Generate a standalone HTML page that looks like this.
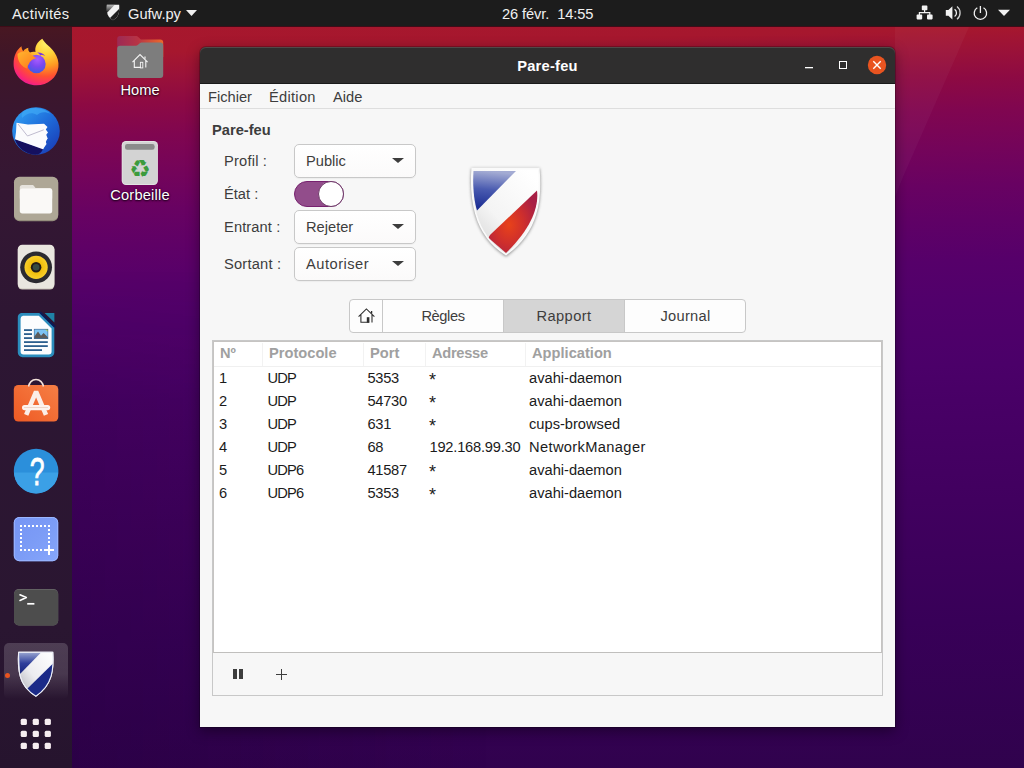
<!DOCTYPE html>
<html lang="fr">
<head>
<meta charset="utf-8">
<title>Pare-feu</title>
<style>
*{box-sizing:border-box;margin:0;padding:0}
html,body{width:1024px;height:768px;overflow:hidden;background:#3a0350}
body{font-family:"Liberation Sans","DejaVu Sans",sans-serif;font-size:14.67px;color:#3d3d3d;position:relative}
.abs{position:absolute}
#wall{position:absolute;left:0;top:0;width:1024px;height:768px;
 background:
  linear-gradient(178.3deg,#a8182c 0px,#a6172e 57px,#9b1238 79px,#8d0a43 107px,#800650 139px,#74045a 177px,#680262 214px,#5f0166 249px,#56006a 289px,#51006b 329px,#4b0069 394px,#480066 429px,#41005f 529px,#380058 649px,#30024d 797px);}
#topbar{position:absolute;left:0;top:0;width:1024px;height:27px;background:#1c1c1c;color:#f0f0f0;border-bottom:1px solid #3f0c18}
#topbar span{position:absolute;top:1px;line-height:27px;white-space:nowrap}
#dock{position:absolute;left:0;top:27px;width:72px;height:741px;background:linear-gradient(180deg,#481722 0,#3f1628 30px,#391630 90px,#351733 150px,#2d1633 300px,#2a1631 600px,#26142e 741px)}
.dicon{position:absolute;left:0;width:72px}
.lbl{position:absolute;color:#fff;text-align:center;white-space:nowrap;text-shadow:0 1px 2px rgba(0,0,0,.8),0 0 2px rgba(0,0,0,.6)}
#win{position:absolute;left:200px;top:47px;width:695px;height:680px;background:linear-gradient(#2f2e2e 0,#2f2e2e 20px,#f7f7f7 20px);border-radius:6px 6px 0 0;
 box-shadow:0 0 0 1px rgba(0,0,0,.22),0 4px 14px 0 rgba(0,0,0,.42)}
#title{position:absolute;left:0;top:0;width:695px;height:37px;background:#2f2e2e;border-radius:6px 6px 0 0;border-bottom:1px solid #1a1a1a;box-shadow:inset 0 1px 0 rgba(255,220,220,.16)}
#title .t{position:absolute;left:0;width:695px;top:0;line-height:38px;text-align:center;color:#fff;font-weight:bold}
#menubar{position:absolute;left:0;top:37px;width:695px;height:25px;border-bottom:1px solid #dedede;background:#f7f7f7}
#menubar span{position:absolute;top:0;line-height:26px}
.lab{position:absolute;white-space:nowrap;line-height:20px}
.combo{position:absolute;left:94px;width:122px;height:34px;border:1px solid #c8c8c8;border-radius:5px;background:linear-gradient(#ffffff,#fbfafa);box-shadow:0 1px 1px rgba(0,0,0,.04)}
.combo span{position:absolute;left:11px;top:0;line-height:32px}
.combo i{position:absolute;left:97px;top:13px;width:0;height:0;border-left:6px solid transparent;border-right:6px solid transparent;border-top:5.500px solid #3d3d3d}
#tabs{position:absolute;left:149px;top:252px;width:397px;height:34px;border:1px solid #c8c8c8;border-radius:4px;background:#fdfdfd;overflow:hidden}
#tabs div{position:absolute;top:0;height:32px;line-height:32px;text-align:center;border-left:1px solid #c8c8c8}
#frame{position:absolute;left:12px;top:293px;width:671px;height:356px;border:1px solid #c8c8c8;background:#f7f7f7}
#tree{position:absolute;left:0;top:0;width:669px;height:312px;background:#fff;border:1px solid #c6c4c2;border-bottom:1px solid #c0bfbd}
.hd{position:absolute;top:1px;height:23px;line-height:20px;font-weight:bold;color:#a0a0a0;border-right:1px solid #f2f2f2;padding-left:6px}
.row{position:absolute;left:0;width:667px;height:23px;line-height:23px;color:#1b1b1b}
.row span{position:absolute;top:0;white-space:nowrap}
</style>
</head>
<body>
<div id="wall"></div>
<div class="abs" style="left:895px;top:27px;width:80px;height:170px;background:rgba(255,255,255,.035);clip-path:polygon(0 0,74px 0,8px 150px,0 170px)"></div>
<div class="abs" style="left:72px;top:270px;width:420px;height:498px;background:linear-gradient(90deg,rgba(8,0,20,.14),rgba(8,0,20,.1) 130px,rgba(8,0,20,0));-webkit-mask-image:linear-gradient(180deg,transparent,#000 130px);mask-image:linear-gradient(180deg,transparent,#000 130px)"></div>

<!-- desktop icons -->
<div id="desk">
<svg class="abs" style="left:100px;top:27px" width="80" height="60" viewBox="0 0 80 60">
 <defs><linearGradient id="hfb" x1="0" y1="0" x2="1" y2="0"><stop offset="0" stop-color="#9c2a55"/><stop offset=".45" stop-color="#b83445"/><stop offset="1" stop-color="#ec6a2c"/></linearGradient></defs>
 <path d="M17.200 12a3 3 0 0 1 3-3h15.500c1.200 0 2 .4 2.800 1.200l2.300 2.200h19.400a3 3 0 0 1 3 3V30H17.200Z" fill="url(#hfb)"/>
 <path d="M17.200 21.800a3 3 0 0 1 3-3h15c1.200 0 2-.3 2.800-1l1.500-1.300c.8-.7 1.600-1 2.800-1h17.900a3 3 0 0 1 3 3V48a3 3 0 0 1-3 3H20.200a3 3 0 0 1-3-3Z" fill="#7d7d7d"/>
 <path d="M32.500 35.200L40 27.600L47.600 35.200M34.300 33.800V40.400H41M45.800 33.800V40.400" fill="none" stroke="#f4f4f4" stroke-width="1.100"/>
 <rect x="40.400" y="35.300" width="2.400" height="5.600" fill="none" stroke="#f4f4f4" stroke-width=".9"/>
 <path d="M45 29.500v2.200" stroke="#f4f4f4" stroke-width="1.200"/>
</svg>
<div class="lbl" style="left:100px;top:80px;width:80px;line-height:20px">Home</div>
<svg class="abs" style="left:100px;top:130px" width="80" height="60" viewBox="0 0 80 60">
 <rect x="21.700" y="11" width="36.200" height="44" rx="4.200" fill="#e3e3e3"/>
 <rect x="22.600" y="11.900" width="34.400" height="42.200" rx="3.500" fill="#d3d3d3"/>
 <rect x="25" y="14" width="29.600" height="5.700" rx="2.200" fill="#8b8b8b"/>
 <text x="40" y="47.200" font-family="DejaVu Sans, sans-serif" font-weight="bold" font-size="24" text-anchor="middle" fill="#3b9b3c">♻</text>
</svg>
<div class="lbl" style="left:100px;top:185px;width:80px;line-height:20px;letter-spacing:.18px">Corbeille</div>
</div>

<div id="topbar">
<span style="left:12px;letter-spacing:.32px">Activités</span>
<svg class="abs" style="left:106px;top:4px" width="14" height="17" viewBox="0 0 14 17">
 <defs><linearGradient id="tsg" x1="0" y1="0" x2="0" y2="1"><stop offset="0" stop-color="#b8b8b8"/><stop offset="1" stop-color="#1a1a1a"/></linearGradient>
 <clipPath id="tsc"><path d="M.8 .8h12.400c.2 4 0 7-.8 9.500C11.400 13 9.500 15 7 16.200C4.500 15 2.600 13 1.600 10.300C.8 7.800 .6 4.800 .8 .8Z"/></clipPath></defs>
 <path d="M.8 .8h12.400c.2 4 0 7-.8 9.500C11.400 13 9.500 15 7 16.200C4.500 15 2.600 13 1.600 10.300C.8 7.800 .6 4.800 .8 .8Z" fill="#f2f2f2"/>
 <g clip-path="url(#tsc)"><path d="M.8 .8h8L.8 9Z" fill="url(#tsg)"/><path d="M13.500 4.500L4 14l3 3 7-6Z" fill="#1e1e1e"/></g>
</svg>
<span style="left:128px">Gufw.py</span>
<svg class="abs" style="left:186px;top:10px" width="11" height="6" viewBox="0 0 11 6"><path d="M0 0h11L5.500 6z" fill="#f0f0f0"/></svg>
<span style="left:502px;letter-spacing:-.1px">26 févr.&nbsp; 14:55</span>
<svg class="abs" style="left:912px;top:0" width="104" height="27" viewBox="0 0 104 27">
 <g fill="#f2f2f2">
  <rect x="9.800" y="5.600" width="5.600" height="4.600" rx=".8"/><rect x="4.600" y="14.600" width="5.600" height="4.800" rx=".8"/><rect x="15" y="14.600" width="5.600" height="4.800" rx=".8"/>
  <path d="M12 10h1.200v2H18.400v3H17.200v-1.800H8v1.800H6.800v-3H12Z"/>
  <path d="M33.800 10h2.600l4-3.800v13.400l-4-3.800h-2.600Z"/>
 </g>
 <path d="M42.600 9.200a4.600 4.600 0 0 1 0 7.400" fill="none" stroke="#f2f2f2" stroke-width="1.300"/>
 <path d="M45 6.600a8 8 0 0 1 0 12.600" fill="none" stroke="#f2f2f2" stroke-width="1.300" opacity=".85"/>
 <path d="M65.300 7.800a6.200 6.200 0 1 0 6.200 0" fill="none" stroke="#f2f2f2" stroke-width="1.300"/>
 <path d="M68.400 6v7" stroke="#f2f2f2" stroke-width="1.300"/>
 <path d="M86 9.800h12l-6 6.200Z" fill="#f2f2f2"/>
</svg>
</div>

<div id="dock">
<!--DOCKSTART-->
<!-- active highlight -->
<div class="abs" style="left:4px;top:616px;width:64px;height:56px;border-radius:5px;background:linear-gradient(180deg,rgba(255,255,255,.17) 0,rgba(255,255,255,.15) 55%,rgba(255,255,255,0) 100%)"></div>
<div class="abs" style="left:4.500px;top:645.500px;width:5.500px;height:5.500px;border-radius:3px;background:#e95420"></div>

<!-- firefox : viewBox maps to screen x 4..68, y 31..95 -->
<svg class="abs" style="left:4px;top:4px" width="64" height="64" viewBox="0 0 64 64">
 <defs>
  <radialGradient id="ffg" cx=".72" cy=".1" r=".98"><stop offset="0" stop-color="#fff36a"/><stop offset=".25" stop-color="#ffd238"/><stop offset=".5" stop-color="#ff9a22"/><stop offset=".72" stop-color="#ff5230"/><stop offset=".9" stop-color="#fc2a6c"/><stop offset="1" stop-color="#e81a9a"/></radialGradient>
  <radialGradient id="ffp" cx=".55" cy=".25" r=".8"><stop offset="0" stop-color="#a85cff"/><stop offset=".5" stop-color="#7a48f0"/><stop offset="1" stop-color="#3a5fe0"/></radialGradient>
  <linearGradient id="ffh" x1="0" y1="0" x2="1" y2="1"><stop offset="0" stop-color="#ffb52e"/><stop offset=".6" stop-color="#ff8f22"/><stop offset="1" stop-color="#ff6a28"/></linearGradient>
 </defs>
 <path d="M38.300 7.800C41 13 47 16 50.500 21.500C53.500 26 55 31 54.400 36C53.200 46.500 44 54.300 32.500 54.300C19.500 54.300 9.600 44.500 9.600 33C9.600 25 12.500 19 17.500 15.300C17.500 17.500 18.200 19 19.300 20.200C20.500 18.300 22.300 17.200 24.300 16.800C24 19 24.500 20.500 26 21.500C28 20.500 30 20.500 31.500 21C30.500 16 33 11 38.300 7.800Z" fill="url(#ffg)"/>
 <circle cx="32.500" cy="33" r="9.200" fill="url(#ffp)"/>
 <path d="M13.500 23C17 20 23 20 27 23.500L32.400 27.300C28.500 28 26 30 24.600 33.500C23.500 35 23 36 23 37.500C18 36 13.500 31 13.500 23Z" fill="url(#ffh)"/>
 <path d="M33 21.500C36.500 21 39.500 22.500 41 25C39 23.800 37.500 24 36.300 24.500C35.500 23 34.500 22 33 21.500Z" fill="#7a3ae0"/>
</svg>

<!-- thunderbird : screen 4..68, 99..163 -->
<svg class="abs" style="left:4px;top:72px" width="64" height="64" viewBox="0 0 64 64">
 <defs>
  <linearGradient id="tbg" x1=".15" y1=".1" x2=".9" y2=".9"><stop offset="0" stop-color="#2f9bf0"/><stop offset=".45" stop-color="#1f6fdc"/><stop offset="1" stop-color="#1a3fb8"/></linearGradient>
 </defs>
 <circle cx="32" cy="32" r="23.800" fill="url(#tbg)"/>
 <path d="M11 41C14 49 21 54.500 30 55.600C34 55.800 37 55 39 50L11 40Z" fill="#15105f"/>
 <path d="M20 12C28 7 40 8 47 15C41 12 36 13 33 16C28 13 23 14 18 19C17 16 18 14 20 12Z" fill="#3fa8f5" opacity=".7"/>
 <path d="M12.500 23.800L24 25.500L40 24.800L41.500 32L43 40L39 50.200L11 40.200L12 33Z" fill="#fbfbfd"/>
 <path d="M14 25L23.500 37L40.500 30.500" fill="none" stroke="#b9b4c9" stroke-width=".9"/>
 <path d="M40 24.800L43.500 28L41.800 30.500L44 33.500L42 36L43.800 39.500L41.500 42L42.500 45L39 50.200Z" fill="#fbfbfd"/>
</svg>

<!-- files : screen 4..68, 167..231 -->
<svg class="abs" style="left:4px;top:140px" width="64" height="64" viewBox="0 0 64 64">
 <rect x="10" y="10.400" width="44.200" height="43.800" rx="5.500" fill="#958e7d"/>
 <rect x="10" y="9.800" width="44.200" height="43.200" rx="5.500" fill="#aea796"/>
 <path d="M15.800 20.500a2.500 2.500 0 0 1 2.500-2.500h9.700c1 0 1.500.3 2 1l1.500 2h14.200a2.500 2.500 0 0 1 2.500 2.500v8H15.800Z" fill="#e6e3dd"/>
 <rect x="15.800" y="21.600" width="32.400" height="24.800" rx="2.600" fill="#faf9f7"/>
 <path d="M15.800 22.500h14l2-1.600h14" fill="none"/>
</svg>

<!-- rhythmbox : screen 4..68, 235..299 -->
<svg class="abs" style="left:4px;top:208px" width="64" height="64" viewBox="0 0 64 64">
 <defs><radialGradient id="rbg" cx=".5" cy=".5" r=".5"><stop offset="0" stop-color="#e0a800"/><stop offset=".55" stop-color="#f2c010"/><stop offset="1" stop-color="#f8cf2a"/></radialGradient></defs>
 <rect x="13.800" y="10.600" width="36.600" height="44" rx="4.500" fill="#c9c4b8"/>
 <rect x="13.800" y="9.800" width="36.600" height="43.800" rx="4.500" fill="#e9e6df"/>
 <circle cx="32.100" cy="32.300" r="15.900" fill="#2b2a30"/>
 <circle cx="32.100" cy="32.300" r="11.600" fill="url(#rbg)"/>
 <circle cx="32.100" cy="32.300" r="5.300" fill="#231c18"/>
 <circle cx="32.100" cy="32.300" r="3.300" fill="#364b42"/>
</svg>

<!-- writer : screen 4..68, 303..367 -->
<svg class="abs" style="left:4px;top:276px" width="64" height="64" viewBox="0 0 64 64">
 <path d="M17 10h19l14.300 14v25.500a4.700 4.700 0 0 1-4.700 4.700H18.500a4.700 4.700 0 0 1-4.700-4.700V14.700A4.700 4.700 0 0 1 17 10Z" fill="#2b8dbd"/>
 <path d="M19 12.800h15.800L47.600 25.500v23a3 3 0 0 1-3 3H19.600a3 3 0 0 1-3-3V15.800a3 3 0 0 1 2.400-3Z" fill="#fcfdfe"/>
 <path d="M36 9.200L51 24" stroke="#0c1a55" stroke-width="2.200"/>
 <path d="M40.600 10h9.800v9.400Z" fill="#1f82a6"/>
 <g fill="#2c5f8e"><rect x="20" y="26.200" width="8" height="1.800"/><rect x="20" y="30.200" width="8" height="1.800"/><rect x="20" y="34.200" width="8" height="1.800"/><rect x="20" y="38.200" width="23.800" height="1.800"/><rect x="20" y="42.200" width="23.800" height="1.800"/><rect x="20" y="46.200" width="18" height="1.800"/></g>
 <rect x="30.200" y="26.200" width="13.700" height="9.500" fill="#7cc3f4"/>
 <path d="M41 26.200h2.900v2.600Z" fill="#c8dc40"/>
 <path d="M30.200 35.700v-2l3.800-5.300 3 4.300 2.600-2.800 4.300 4.300v1.500Z" fill="#5b5b5b"/>
 <rect x="30.200" y="26.200" width="13.700" height="9.500" fill="none" stroke="#2c5f8e" stroke-width=".6"/>
</svg>

<!-- software : screen 4..68, 371..435 -->
<svg class="abs" style="left:4px;top:344px" width="64" height="64" viewBox="0 0 64 64">
 <defs><linearGradient id="swg" x1="0" y1="1" x2="1" y2="0"><stop offset="0" stop-color="#ee5a24"/><stop offset="1" stop-color="#f67f45"/></linearGradient></defs>
 <path d="M24.800 16.500v-.8a7.200 7.200 0 0 1 14.400 0v.8" fill="none" stroke="#f4e2da" stroke-width="1.600"/>
 <rect x="9.800" y="14" width="44.500" height="36.600" rx="4.500" fill="url(#swg)"/>
 <path d="M24.800 15.500v-1.500M39.200 15.500v-1.500" stroke="#f4e2da" stroke-width="1.600"/>
 <path d="M22.200 43.800L32.100 20.600L42 43.800" fill="none" stroke="#fbeee8" stroke-width="4.600" stroke-linejoin="miter" stroke-miterlimit="2"/>
 <rect x="18" y="34" width="28.200" height="5.200" rx="2.600" fill="#fdf3ee"/>
 <rect x="20" y="36.100" width="24" height=".7" fill="#e9c9bb"/>
</svg>

<!-- help : screen 4..68, 439..503 -->
<svg class="abs" style="left:4px;top:412px" width="64" height="64" viewBox="0 0 64 64">
 <defs><clipPath id="hpc"><circle cx="32.100" cy="32.100" r="22.300"/></clipPath></defs>
 <circle cx="32.100" cy="32.100" r="22.300" fill="#2b8fdb"/>
 <rect x="0" y="33.500" width="64" height="32" fill="#3ba0e6" clip-path="url(#hpc)"/>
 <text transform="translate(33.200 45.900) scale(.76 1.1)" font-family="Liberation Sans, sans-serif" font-size="35" text-anchor="middle" fill="#fff" stroke="#fff" stroke-width=".7">?</text>
</svg>

<!-- screenshot : screen 4..68, 507..571 -->
<svg class="abs" style="left:4px;top:480px" width="64" height="64" viewBox="0 0 64 64">
 <defs><linearGradient id="scg" x1="0" y1="0" x2="1" y2="1"><stop offset="0" stop-color="#7695f5"/><stop offset=".5" stop-color="#7c9cf6"/><stop offset="1" stop-color="#86a6fb"/></linearGradient></defs>
 <rect x="9.800" y="10" width="44.400" height="44.200" rx="5.500" fill="url(#scg)"/>
 <rect x="10.300" y="10.500" width="43.400" height="43.200" rx="5" fill="none" stroke="#9bb6ff" stroke-width="1"/>
 <path d="M16 19h30M16 43h26" stroke="#fff" stroke-width="2" stroke-dasharray="2 2"/>
 <path d="M17 22v20M45 22v18" stroke="#fff" stroke-width="2" stroke-dasharray="2 2"/>
 <path d="M45 38v10M40 43h10" stroke="#fff" stroke-width="2"/>
</svg>

<!-- terminal : screen 4..68, 575..639 -->
<svg class="abs" style="left:4px;top:548px" width="64" height="64" viewBox="0 0 64 64">
 <rect x="10" y="14" width="44.200" height="36.500" rx="4.800" fill="#6a6a6a"/>
 <rect x="10" y="14.700" width="44.200" height="35.800" rx="4.800" fill="#4d4d4d"/>
 <path d="M16 19.800L22.300 22.600L16 25.400" fill="none" stroke="#fff" stroke-width="1.600" stroke-linecap="round" stroke-linejoin="round"/>
 <path d="M23.200 28.800h7.200" stroke="#fff" stroke-width="1.700"/>
</svg>

<!-- gufw dock : screen 0..72, 639..711 -->
<svg class="abs" style="left:0;top:612px" width="72" height="72" viewBox="0 0 72 72">
 <defs>
  <linearGradient id="gdb" x1="0" y1="0" x2="0" y2="1"><stop offset="0" stop-color="#97a3cf"/><stop offset=".5" stop-color="#2f3f9c"/><stop offset="1" stop-color="#16247c"/></linearGradient>
  <linearGradient id="gdw" x1="0" y1="1" x2="1" y2="0"><stop offset="0" stop-color="#a8a8b0"/><stop offset=".45" stop-color="#ececf0"/><stop offset="1" stop-color="#fff"/></linearGradient>
  <clipPath id="gdc"><path d="M18.600 13.200h34.200c.6 9 .3 17-1.700 24C48.500 46 43 52.500 35.900 57.200C28 52.500 22.500 46 20.200 37.200C18.300 30 18 22 18.600 13.200Z"/></clipPath>
 </defs>
 <path d="M18.600 13.200h34.200c.6 9 .3 17-1.700 24C48.500 46 43 52.500 35.900 57.200C28 52.500 22.500 46 20.200 37.200C18.300 30 18 22 18.600 13.200Z" fill="url(#gdw)" stroke="#e8e8f0" stroke-width="1"/>
 <g clip-path="url(#gdc)">
  <path d="M19 13.500h22L20 35Z" fill="url(#gdb)"/>
  <path d="M53 24.500L26.500 50.500L36 58L54 40Z" fill="#1b2a88"/>
 </g>
 <path d="M18.600 13.200h34.200c.6 9 .3 17-1.700 24C48.500 46 43 52.500 35.900 57.200C28 52.500 22.500 46 20.200 37.200C18.300 30 18 22 18.600 13.200Z" fill="none" stroke="#eef0f8" stroke-width="1.100"/>
</svg>

<!-- apps grid : screen 4..68, 703..767 -->
<svg class="abs" style="left:4px;top:676px" width="64" height="64" viewBox="0 0 64 64">
 <g fill="#f6edf1">
  <rect x="16.700" y="15.800" width="6.200" height="6.200" rx="1.500"/><rect x="28.700" y="15.800" width="6.200" height="6.200" rx="1.500"/><rect x="40.700" y="15.800" width="6.200" height="6.200" rx="1.500"/>
  <rect x="16.700" y="27.800" width="6.200" height="6.200" rx="1.500"/><rect x="28.700" y="27.800" width="6.200" height="6.200" rx="1.500"/><rect x="40.700" y="27.800" width="6.200" height="6.200" rx="1.500"/>
  <rect x="16.700" y="39.800" width="6.200" height="6.200" rx="1.500"/><rect x="28.700" y="39.800" width="6.200" height="6.200" rx="1.500"/><rect x="40.700" y="39.800" width="6.200" height="6.200" rx="1.500"/>
 </g>
</svg>
<!--DOCKEND-->
</div>

<div id="win">
 <div id="title"><div class="t" style="letter-spacing:.25px">Pare-feu</div>
  <svg class="abs" style="left:600px;top:8px" width="90" height="22" viewBox="0 0 90 22">
   <rect x="5" y="12" width="8" height="1.300" fill="#fff"/>
   <rect x="39.500" y="6.500" width="7" height="7" fill="none" stroke="#fff" stroke-width="1"/>
   <circle cx="77" cy="10" r="9.200" fill="#e95420"/>
   <path d="M73.300 6.300L80.700 13.700M80.700 6.300L73.300 13.700" stroke="#fff" stroke-width="1.400"/>
  </svg>
 </div>
 <div id="menubar"><span style="left:8px">Fichier</span><span style="left:69px;letter-spacing:.28px">Édition</span><span style="left:133px">Aide</span></div>

 <div class="lab" style="left:12px;top:73px;font-weight:bold">Pare-feu</div>
 <div class="lab" style="left:24px;top:104px;letter-spacing:.2px">Profil :</div>
 <div class="lab" style="left:24px;top:137px">État :</div>
 <div class="lab" style="left:24px;top:170px;letter-spacing:.1px">Entrant :</div>
 <div class="lab" style="left:24px;top:207px;letter-spacing:.2px">Sortant :</div>
 <div class="combo" style="top:97px"><span>Public</span><i></i></div>
 <div class="abs" style="left:94px;top:134px;width:50px;height:26px;border-radius:13px;background:#924d8b;border:1px solid #77216f">
   <div class="abs" style="right:-1px;top:-1px;width:26px;height:26px;border-radius:13px;background:#fff;border:1px solid #6e3a68"></div>
 </div>
 <div class="combo" style="top:163px"><span>Rejeter</span><i></i></div>
 <div class="combo" style="top:200px"><span style="letter-spacing:.5px">Autoriser</span><i></i></div>

 <svg class="abs" style="left:256px;top:109px" width="100" height="110" viewBox="0 0 100 110">
 <defs>
  <filter id="bsf" x="-20%" y="-20%" width="140%" height="140%"><feGaussianBlur stdDeviation="1.600"/></filter>
  <linearGradient id="bsb" x1=".2" y1="0" x2=".1" y2="1"><stop offset="0" stop-color="#a3abd3"/><stop offset=".45" stop-color="#4a5bb0"/><stop offset="1" stop-color="#15278f"/></linearGradient>
  <radialGradient id="bsr" cx=".42" cy=".55" r=".6"><stop offset="0" stop-color="#e8421a"/><stop offset=".5" stop-color="#cf2f2c"/><stop offset="1" stop-color="#a81f45"/></radialGradient>
  <linearGradient id="bsw" x1="0" y1="1" x2=".8" y2="0"><stop offset="0" stop-color="#d0d0d0"/><stop offset=".45" stop-color="#f4f4f4"/><stop offset="1" stop-color="#ffffff"/></linearGradient>
  <clipPath id="bsc"><path d="M16.200 12.600H82.800C84.200 30 83.600 45 79.500 58C74.500 75 64.500 88 50 98.600C35 89 25 76 20 58C16 44 15 29 16.200 12.600Z"/></clipPath>
 </defs>
 <path d="M16.200 12.600H82.800C84.200 30 83.600 45 79.500 58C74.500 75 64.500 88 50 98.600C35 89 25 76 20 58C16 44 15 29 16.200 12.600Z" fill="#777" stroke="#777" stroke-width="2" filter="url(#bsf)" transform="translate(0 .8)" opacity=".8"/>
 <path d="M16.200 12.600H82.800C84.200 30 83.600 45 79.500 58C74.500 75 64.500 88 50 98.600C35 89 25 76 20 58C16 44 15 29 16.200 12.600Z" fill="url(#bsw)"/>
 <g clip-path="url(#bsc)">
  <path d="M17.500 15H60L21 54.500C18 45 16.500 30 17.500 15Z" fill="url(#bsb)"/>
  <path d="M81 34.500C83 50 76 72 50 97L32.600 82C33 80 34 79 35 78Z" fill="url(#bsr)"/>
 </g>
 <path d="M16.200 12.600H82.800C84.200 30 83.600 45 79.500 58C74.500 75 64.500 88 50 98.600C35 89 25 76 20 58C16 44 15 29 16.200 12.600Z" fill="none" stroke="#fafafa" stroke-width="1.600"/>
</svg>

 <div id="tabs">
  <div style="left:0;width:32px;border-left:0"><svg class="abs" style="left:-.5px;top:0" width="33" height="32" viewBox="0 0 33 32">
 <path d="M8.600 16.600L16.400 8.900L24.400 16.600M10.900 14.800V22.300H19.200M22 14.800V22.600" fill="none" stroke="#2e2e2e" stroke-width="1.100"/>
 <rect x="16.800" y="17.200" width="2.600" height="5.400" fill="#2e2e2e"/>
 <path d="M21.600 11v2.400" stroke="#2e2e2e" stroke-width="1.300"/>
</svg></div>
  <div style="left:32px;width:121px;letter-spacing:-.4px">Règles</div>
  <div style="left:153px;width:121px;background:#d5d5d5;letter-spacing:.4px">Rapport</div>
  <div style="left:274px;width:122px;letter-spacing:.3px">Journal</div>
 </div>

 <div id="frame">
  <div id="tree">
   <div class="hd" style="left:0;width:49px">Nº</div>
   <div class="hd" style="left:49px;width:101px">Protocole</div>
   <div class="hd" style="left:150px;width:62px">Port</div>
   <div class="hd" style="left:212px;width:100px;letter-spacing:-.3px">Adresse</div>
   <div class="hd" style="left:312px;width:355px;border-right:0">Application</div>
   <div class="abs" style="left:0;top:24px;width:667px;height:1px;background:#f0f0f0"></div>
   <div class="row" style="top:25px"><span style="left:5px">1</span><span style="left:53.500px;letter-spacing:-.85px">UDP</span><span style="left:153.500px;letter-spacing:-.3px">5353</span><span style="left:215px;font-size:18px;top:1.500px">*</span><span style="left:315px">avahi-daemon</span></div>
   <div class="row" style="top:48px"><span style="left:5px">2</span><span style="left:53.500px;letter-spacing:-.85px">UDP</span><span style="left:153.500px;letter-spacing:-.3px">54730</span><span style="left:215px;font-size:18px;top:1.500px">*</span><span style="left:315px">avahi-daemon</span></div>
   <div class="row" style="top:71px"><span style="left:5px">3</span><span style="left:53.500px;letter-spacing:-.85px">UDP</span><span style="left:153.500px;letter-spacing:-.3px">631</span><span style="left:215px;font-size:18px;top:1.500px">*</span><span style="left:315px">cups-browsed</span></div>
   <div class="row" style="top:94px"><span style="left:5px">4</span><span style="left:53.500px;letter-spacing:-.85px">UDP</span><span style="left:153.500px;letter-spacing:-.3px">68</span><span style="left:215.500px;letter-spacing:-.22px">192.168.99.30</span><span style="left:315px"><b style="font-weight:normal;letter-spacing:.36px">NetworkManager</b></span></div>
   <div class="row" style="top:117px"><span style="left:5px">5</span><span style="left:53.500px;letter-spacing:-.85px">UDP6</span><span style="left:153.500px;letter-spacing:-.3px">41587</span><span style="left:215px;font-size:18px;top:1.500px">*</span><span style="left:315px">avahi-daemon</span></div>
   <div class="row" style="top:140px"><span style="left:5px">6</span><span style="left:53.500px;letter-spacing:-.85px">UDP6</span><span style="left:153.500px;letter-spacing:-.3px">5353</span><span style="left:215px;font-size:18px;top:1.500px">*</span><span style="left:315px">avahi-daemon</span></div>
  </div>
  <svg class="abs" style="left:15px;top:323px" width="70" height="20" viewBox="0 0 70 20">
   <rect x="5" y="5" width="4" height="10" fill="#3d3d3d"/><rect x="11" y="5" width="4" height="10" fill="#3d3d3d"/>
   <path d="M53.500 5v11M48 10.500h11" stroke="#3d3d3d" stroke-width="1"/>
  </svg>
 </div>
</div>
</body>
</html>
